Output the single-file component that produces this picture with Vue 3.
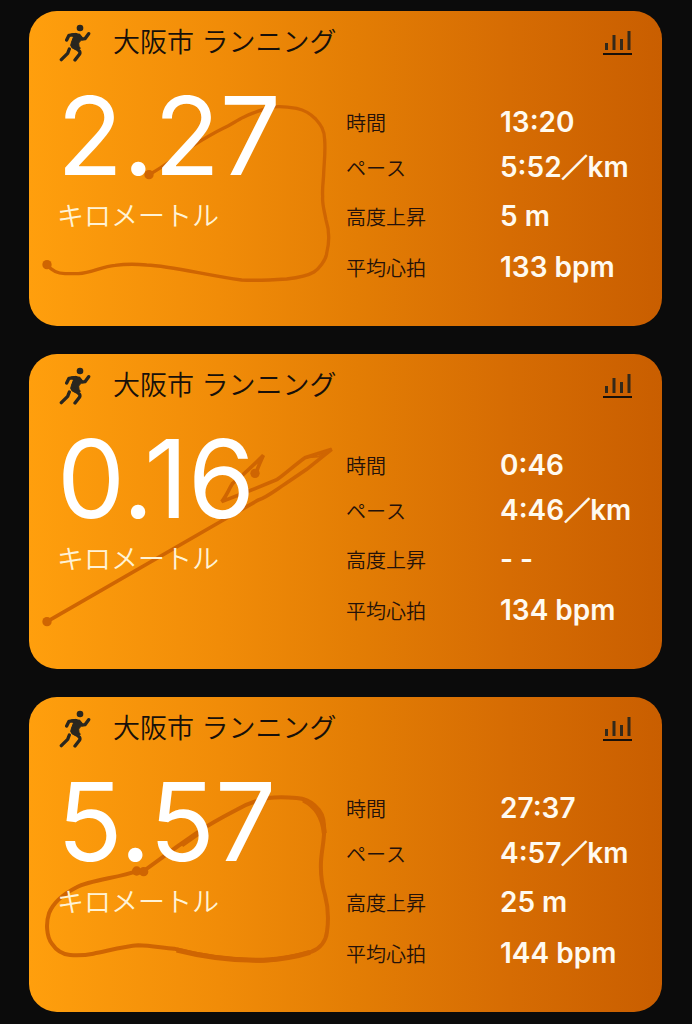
<script setup>
const runs = [
  {
    title: '大阪市 ランニング',
    distance: '2.27',
    viewBox: '-3 -207 1899 945',
    paths: [
      { d: 'M51 554C65 572 82 580 105 581H145C185 579 215 560 255 556C285 552 320 552 350 555C425 558 530 586 635 600C680 602 725 600 770 597C805 593 832 588 852 576C865 568 888 541 890 520C898 488 898 450 888 420C883 392 876 372 878 350C876 320 881 300 881 280C882 250 887 215 884 180C884 150 872 134 857 117C838 98 825 91 800 85C770 80 735 78 715 84C690 92 660 100 640 112C620 122 600 136 580 145C545 162 500 190 475 205C435 232 405 258 357 284', w: 10 },
    ],
    dots: [[51, 554], [357, 284]],
    stats: [['時間', '13:20'], ['ペース', '5:52', 'km'], ['高度上昇', '5 m'], ['平均心拍', '133 bpm']],
  },
  {
    title: '大阪市 ランニング',
    distance: '0.16',
    viewBox: '-3 -198 1899 945',
    paths: [
      { d: 'M51 605L580 300L685 240C710 232 740 208 765 192L830 148L905 88L825 113C800 130 770 158 742 178L675 206L575 245C588 230 598 205 608 190C640 165 668 138 700 106C692 125 684 140 679 158', w: 11 },
      { d: 'M905 88L825 113L865 110Z', w: 5 },
    ],
    dots: [[51, 605], [675, 160]],
    stats: [['時間', '0:46'], ['ペース', '4:46', 'km'], ['高度上昇', '- -'], ['平均心拍', '134 bpm']],
  },
  {
    title: '大阪市 ランニング',
    distance: '5.57',
    viewBox: '-3 -204 1899 945',
    paths: [
      { d: 'M320 318C270 338 180 345 140 367C105 385 70 412 57 445C47 475 50 515 65 535C80 558 100 568 120 570C145 572 170 570 190 566C240 556 285 544 325 541C365 542 400 549 432 551C500 570 600 584 690 587C750 586 800 572 845 560C870 550 888 528 891 500C896 465 893 420 885 390C876 360 871 330 873 290C875 250 885 220 882 185C883 155 870 135 855 122C840 108 825 101 800 99C770 96 735 96 715 99C680 106 645 120 620 134C570 160 535 180 510 197L440 246L341 318', w: 12 },
      { d: 'M455 240L515 198M820 105C855 122 878 150 883 205M440 555C530 578 620 587 700 586C760 582 800 575 840 562', w: 15 },
    ],
    dots: [[320, 318], [341, 320]],
    stats: [['時間', '27:37'], ['ペース', '4:57', 'km'], ['高度上昇', '25 m'], ['平均心拍', '144 bpm']],
  },
]
</script>

<template>
  <main class="feed">
    <article v-for="run in runs" :key="run.distance" class="card">
      <svg class="route" :viewBox="run.viewBox" preserveAspectRatio="xMinYMin meet" aria-hidden="true">
        <path v-for="p in run.paths" :key="p.d" :d="p.d" :stroke-width="p.w" />
        <circle v-for="dot in run.dots" :key="dot[0]" :cx="dot[0]" :cy="dot[1]" r="14" />
      </svg>

      <header class="head">
        <svg class="runner" viewBox="120 69 96 114" aria-hidden="true">
          <circle cx="183" cy="81" r="10" />
          <path class="torso" d="M156 99L171 97Q182 99 189 108L186 118L179 126L180 136L184 142L170 146Q156 142 155 133Q156 126 163 109Z" />
          <path d="M143 117L150 103L168 101M180 103L189 114L198 113L209 98M164 136L181 150Q184 154 182 159L168 177M151 144L146 157L127 176" />
        </svg>
        <h2 class="title">{{ run.title }}</h2>
        <button class="chart" type="button" aria-label="グラフ">
          <svg viewBox="0 0 30 26" aria-hidden="true">
            <path class="bars" d="M4.500 20V13M12 20V5M19.500 20V9M27 20V1" />
            <path class="base" d="M1 24H30" />
          </svg>
        </button>
      </header>

      <div class="body">
        <p class="distance">
          <span class="number">{{ run.distance }}</span>
          <span class="unit">キロメートル</span>
        </p>
        <dl class="stats">
          <div v-for="[label, value, per] in run.stats" :key="label" class="row">
            <dt>{{ label }}</dt>
            <dd>{{ value }}<template v-if="per"><span class="slash">／</span>{{ per }}</template></dd>
          </div>
        </dl>
      </div>
    </article>
  </main>
</template>

<style>
body {
  background: #0b0b0b;
}
</style>

<style scoped>
.feed {
  display: flex;
  flex-direction: column;
  gap: 28px;
  padding: 11px 30px 12px 29px;
  font-family: Inter, "Noto Sans CJK JP", sans-serif;
}
.card {
  position: relative;
  box-sizing: border-box;
  padding: 10px 30px 34px 28px;
  border-radius: 28px;
  background: linear-gradient(90deg, #ff9f0d 0%, #f18c08 30%, #e37d04 52%, #d66c03 76%, #c95e00 100%);
  overflow: hidden;
}
.route {
  position: absolute;
  inset: 0;
  width: 100%;
  height: 100%;
  fill: none;
  stroke: #cf6502;
  stroke-linejoin: miter;
}
.route circle {
  fill: #cf6502;
  stroke: none;
}
.head {
  position: relative;
  display: flex;
  align-items: center;
  height: 44px;
}
.runner {
  width: 32px;
  height: 38px;
  margin: 0 22px 0 2px;
  fill: #29261f;
  stroke: #29261f;
  stroke-width: 10;
  stroke-linecap: round;
  stroke-linejoin: round;
}
.runner circle {
  stroke: none;
}
.runner path {
  fill: none;
}
.runner .torso {
  fill: #29261f;
  stroke-width: 3;
}
.title {
  flex: 1;
  margin: 0;
  color: #17100a;
  font-size: 27px;
  font-weight: 350;
  font-kerning: none;
  line-height: 40px;
}
.chart {
  padding: 0;
  border: 0;
  background: none;
  line-height: 0;
}
.chart svg {
  width: 30px;
  height: 26px;
  fill: none;
}
.bars {
  stroke: #33291a;
  stroke-width: 3;
}
.base {
  stroke: #17100a;
  stroke-width: 2;
}
.body {
  position: relative;
  display: grid;
  grid-template-columns: 289fr 286fr;
  padding-top: 16px;
}
.distance {
  display: flex;
  flex-direction: column;
  gap: 6px;
  margin: 0;
  color: #fff;
}
.number {
  font-size: 108px;
  line-height: 110px;
}
.unit {
  color: #fff3d6;
  font-size: 27px;
  font-weight: 350;
  font-kerning: none;
  line-height: 40px;
}
.stats {
  display: grid;
  grid-template-rows: 44px 46px 52px 50px;
  margin: 19px 0 0;
}
.row {
  display: grid;
  grid-template-columns: 154px 1fr;
  align-items: center;
  white-space: nowrap;
}
dt {
  color: #24110a;
  font-size: 20px;
  font-weight: 350;
  font-kerning: none;
}
dd {
  margin: 0;
  color: #fffaf0;
  font-size: 28px;
  font-weight: 600;
  line-height: 40px;
}
.slash {
  font-family: "Noto Sans CJK JP", sans-serif;
  font-size: 26px;
  font-weight: 700;
  line-height: 1;
  -webkit-text-stroke: 1px #fffaf0;
}
</style>
